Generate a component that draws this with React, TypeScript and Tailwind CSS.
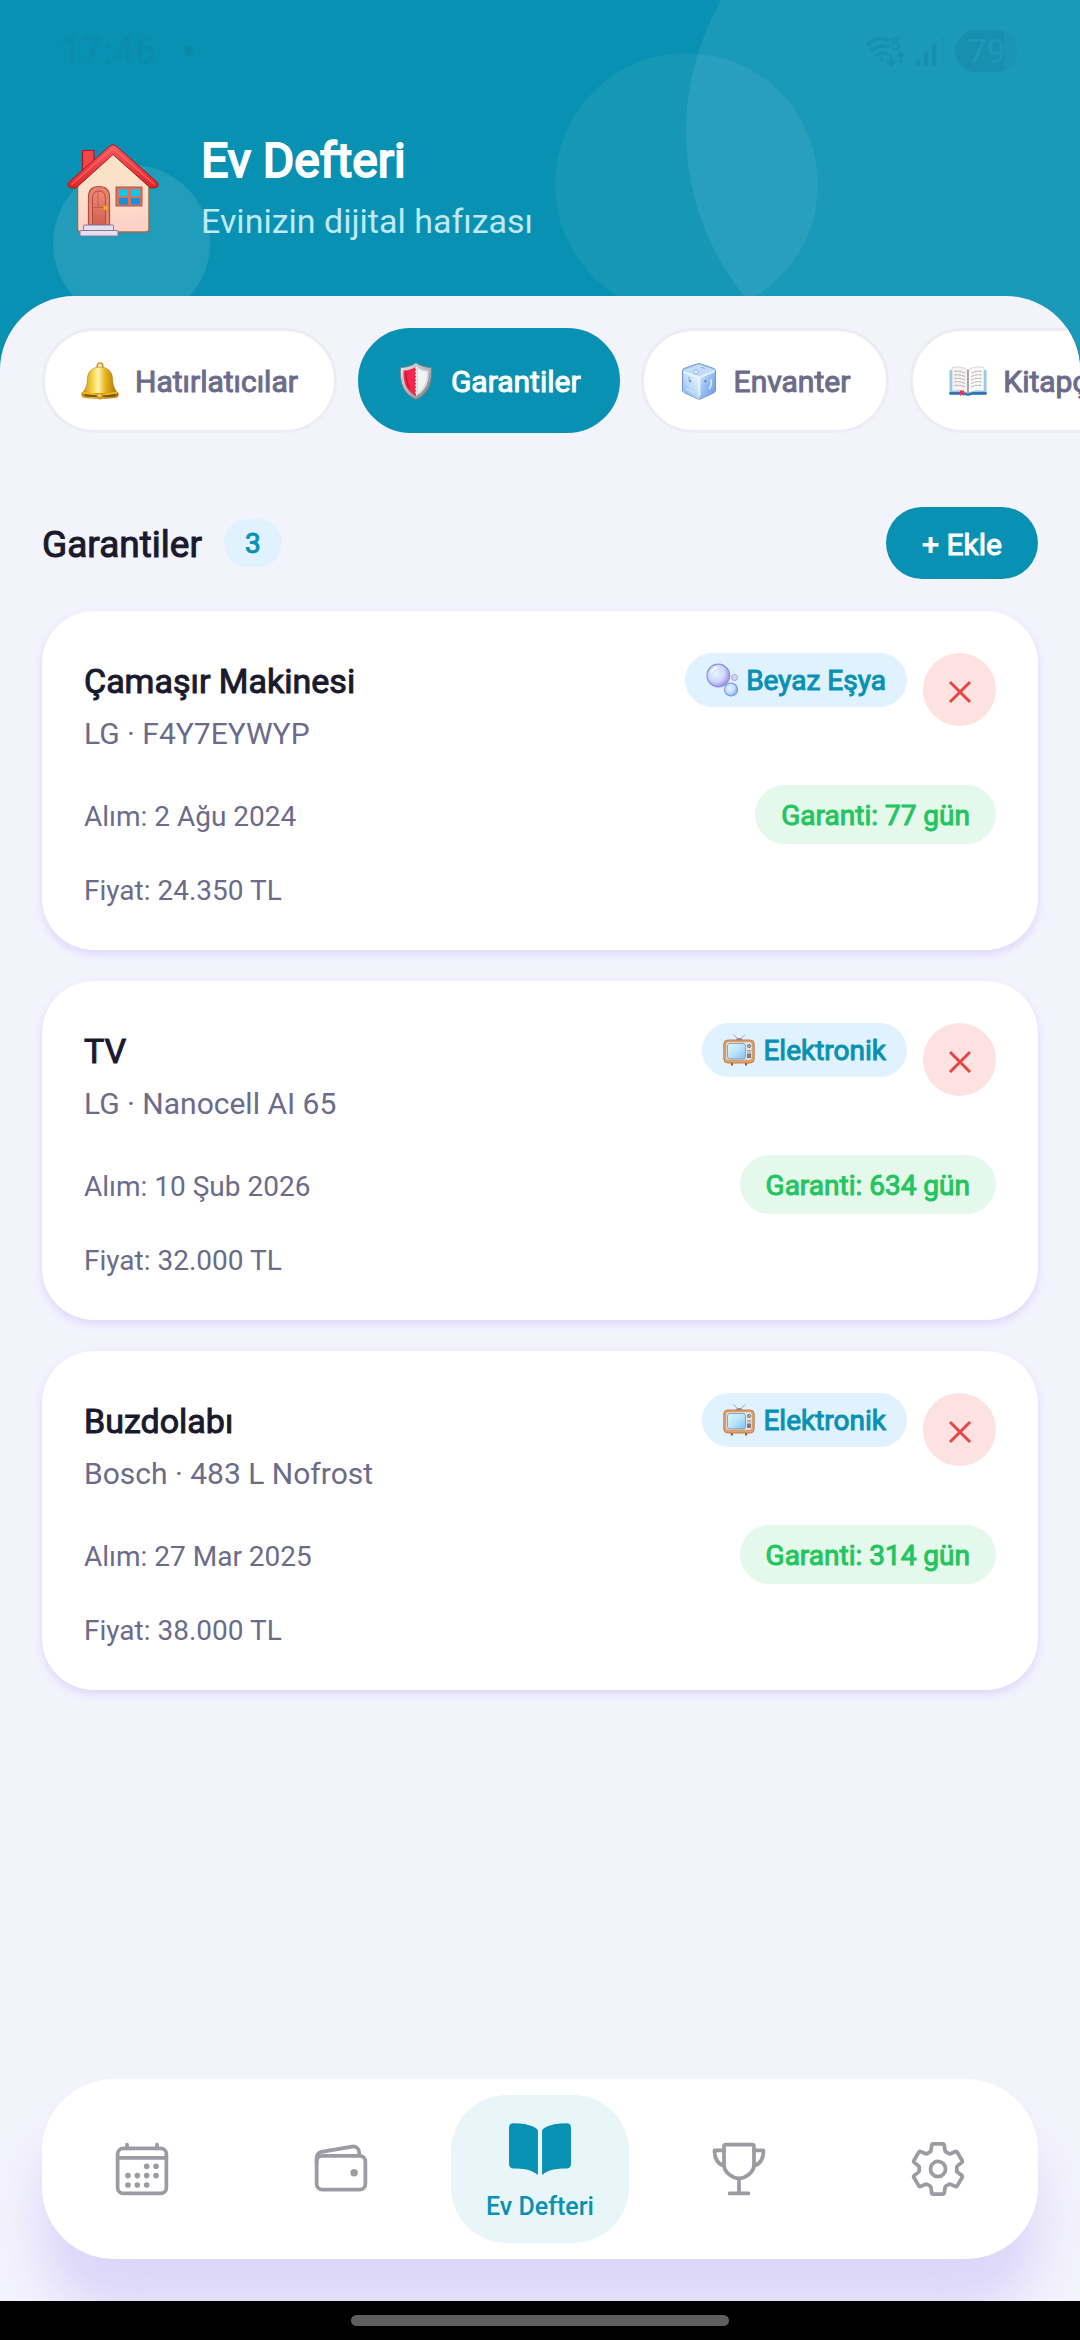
import { useState } from "react";
import { IoBook, IoCalendarOutline, IoSettingsOutline, IoTrophyOutline, IoWalletOutline } from "react-icons/io5";

function HouseIcon() {
	return (
		<svg viewBox="0 0 92 93" className="w-[92px] h-[93px]" aria-hidden="true">
			<defs>
				<linearGradient id="wall" x1="0" y1="0" x2="0" y2="1">
					<stop offset="0" stopColor="#f9e3c4" />
					<stop offset="0.5" stopColor="#fce0cb" />
					<stop offset="1" stopColor="#fdd0c6" />
				</linearGradient>
				<linearGradient id="roof" x1="0" y1="0" x2="0" y2="1">
					<stop offset="0" stopColor="#fb5a60" />
					<stop offset="1" stopColor="#dc2429" />
				</linearGradient>
				<linearGradient id="door" x1="0" y1="0" x2="0" y2="1">
					<stop offset="0" stopColor="#f08a72" />
					<stop offset="1" stopColor="#cf5f55" />
				</linearGradient>
			</defs>
			<path d="M15.500 6.500h11.500v20l-11.500 10z" fill="#f0474c" stroke="#a8181c" strokeWidth="1.200" />
			<path d="M10.500 38L46 7l36 31v47q0 3-3 3H13.500q-3 0-3-3z" fill="url(#wall)" stroke="#9a6b4c" strokeWidth="1.500" />
			<path d="M46 0.800q2 0 3.500 1.500L90.500 38.500q2 3-1 5l-6 0.500L46 10.500 9 44H3.500q-4-2-2-5.500L42.500 2.300Q44 0.800 46 0.800z" fill="url(#roof)" stroke="#a5161b" strokeWidth="1" />
			<path d="M46 4L5 40M46 4l41 36" stroke="#ff7a7a" strokeWidth="1.500" strokeLinecap="round" opacity="0.6" />
			<path d="M21.500 81V53q0-10.500 10.500-10.500T42.500 53v28z" fill="#e8836d" stroke="#b04b3f" strokeWidth="1.200" />
			<path d="M25.500 81V55q0-8 6.500-8t6.500 8v26z" fill="url(#door)" stroke="#b04b3f" strokeWidth="1" />
			<path d="M25.500 63.500h13M31 47v16" stroke="#b95549" strokeWidth="0.800" />
			<circle cx="38.300" cy="64" r="2" fill="#ffb300" />
			<rect x="49" y="43" width="26" height="19" fill="#d77160" stroke="#a9594a" strokeWidth="1" />
			<rect x="52" y="45.500" width="9" height="6.500" fill="#00cdf7" />
			<rect x="64" y="45.500" width="9" height="6.500" fill="#00cdf7" />
			<rect x="52" y="54" width="9" height="6.500" fill="#1192e0" />
			<rect x="64" y="54" width="9" height="6.500" fill="#1192e0" />
			<rect x="16.500" y="81" width="30" height="5.500" rx="1" fill="#e6e0ee" stroke="#85799a" strokeWidth="1" />
			<rect x="13" y="86.500" width="38" height="5.500" rx="1" fill="#e6e0ee" stroke="#85799a" strokeWidth="1" />
		</svg>
	);
}

function BellIcon() {
	return (
		<svg viewBox="0 0 38 38" className="w-[38px] h-[38px]" aria-hidden="true">
			<defs>
				<linearGradient id="bell" x1="0" y1="0" x2="1" y2="0">
					<stop offset="0" stopColor="#c98a08" />
					<stop offset="0.3" stopColor="#f8d545" />
					<stop offset="0.45" stopColor="#fff3ae" />
					<stop offset="0.65" stopColor="#e6b31c" />
					<stop offset="1" stopColor="#a86a0a" />
				</linearGradient>
			</defs>
			<circle cx="19" cy="4" r="2.800" fill="none" stroke="#d99d18" strokeWidth="1.800" />
			<path d="M19 5c-7 0-12 4-12.500 11C6 24 5 27 1 31c-1 2 0 4 2 4.500 10 1.500 22 1.500 32 0 2-.5 3-2.500 2-4.500-4-4-5-7-5.500-15C31 9 26 5 19 5z" fill="url(#bell)" stroke="#b67c10" strokeWidth="0.600" />
			<ellipse cx="19" cy="33.200" rx="16" ry="2.300" fill="#7e5310" />
			<path d="M2 30.500q17 4 34 0" stroke="#e9b62c" strokeWidth="1.800" fill="none" />
			<circle cx="19" cy="34.300" r="3.200" fill="#d99a1c" />
			<circle cx="18.500" cy="33.500" r="1.300" fill="#fbe07a" />
		</svg>
	);
}

function ShieldIcon() {
	return (
		<svg viewBox="0 0 38 38" className="w-[38px] h-[38px]" aria-hidden="true">
			<defs>
				<linearGradient id="rim" x1="0" y1="0" x2="1" y2="1">
					<stop offset="0" stopColor="#e6e9eb" />
					<stop offset="0.5" stopColor="#b5b9bd" />
					<stop offset="1" stopColor="#70767c" />
				</linearGradient>
			</defs>
			<path d="M19 0.800C15 4 9 5.500 3.500 5.500 2.500 20 6 32 19 37.500 32 32 35.500 20 34.500 5.500 29 5.500 23 4 19 0.800z" fill="url(#rim)" stroke="#757b80" strokeWidth="0.800" />
			<path d="M19 4.500C15.500 7 11 8.500 6.500 8.500 6 20 9 29 19 34z" fill="#f5284b" />
			<path d="M19 4.500C22.500 7 27 8.500 31.500 8.500 32 20 29 29 19 34z" fill="#dcdcdf" />
			<path d="M21 7c3 2 6 2.800 9 3-.2 9-2 15-9 21z" fill="#f3f3f5" />
			<path d="M19 5v28" stroke="#fff" strokeWidth="1.500" strokeDasharray="2 1.500" />
			<path d="M9 10c0 8 1 13 4 17" stroke="#c9122f" strokeWidth="1.500" fill="none" />
		</svg>
	);
}

function IceIcon() {
	return (
		<svg viewBox="0 0 38 38" className="w-[38px] h-[38px]" aria-hidden="true">
			<defs>
				<linearGradient id="iceLeft" x1="0" y1="1" x2="0.8" y2="0">
					<stop offset="0" stopColor="#7fa6e6" />
					<stop offset="0.5" stopColor="#bfdcf9" />
					<stop offset="1" stopColor="#eaf6ff" />
				</linearGradient>
				<linearGradient id="iceRight" x1="0" y1="0" x2="1" y2="1">
					<stop offset="0" stopColor="#cfe6fc" />
					<stop offset="0.5" stopColor="#94bdf2" />
					<stop offset="1" stopColor="#6d92dd" />
				</linearGradient>
			</defs>
			<path d="M4 6.500L17.500 1.800q1.500-.5 3 0L34 6.500q1.500.8 1.500 2.500v19q0 2-1.800 3L21 36.800q-2 .8-3.500 0L4 30.500q-1.500-1-1.500-2.500V9q0-1.700 1.500-2.500z" fill="#a9c9f3" stroke="#7497d2" strokeWidth="1" />
			<path d="M3.500 9.500L19.500 15.500v21q-1 .3-2 0L4.500 30q-1-.7-1-2z" fill="url(#iceLeft)" />
			<path d="M19.500 15.500L35 9v19q0 1.500-1.500 2.500L21 36.300l-1.500.2z" fill="url(#iceRight)" />
			<path d="M4 8L18 2.800q1-.4 2 0L34.500 8 19.500 14.500z" fill="#c3ddf6" />
			<path d="M3.500 9.500l16 6 15.500-6.500M19.500 15.500V34" stroke="#f4fbff" strokeWidth="2" fill="none" opacity="0.75" />
			<circle cx="16" cy="10" r="2.200" fill="#e9f5ff" stroke="#86a9dc" strokeWidth="0.900" />
			<path d="M21.500 5.500l3 1M9 15v2.500" stroke="#86a9dc" strokeWidth="1" strokeLinecap="round" />
			<circle cx="10" cy="19" r="1.300" fill="#6d97dd" />
			<path d="M24 18.500l2.500-.5-1 3z" fill="#4579cf" />
			<path d="M31 18q1 5-1.500 8.500" stroke="#dff0ff" strokeWidth="1.500" strokeLinecap="round" fill="none" />
			<path d="M6 27q4 1 8 4" stroke="#dcecff" fill="none" />
		</svg>
	);
}

function OpenBookIcon() {
	return (
		<svg viewBox="0 0 38 38" className="w-[38px] h-[38px]" aria-hidden="true">
			<path d="M0.500 8h3v20h31V8h3v24.500H22q-3 2-6 0H0.500z" fill="#8ccbea" />
			<path d="M0.500 30h14q4.500 0 4.500 2 0-2 4.500-2h14v2.800H23q-4 2-8 0H0.500z" fill="#2f74b8" />
			<path d="M19 8Q12 3.500 3 5.500V29q9-1.500 16 2z" fill="#f4f2f2" stroke="#c9c4c4" strokeWidth="0.700" />
			<path d="M19 8q7-4.500 16-2.500V29q-9-1.500-16 2z" fill="#fbfafa" stroke="#c9c4c4" strokeWidth="0.700" />
			<path d="M19 8v23" stroke="#9c9696" strokeWidth="1.600" />
			<path d="M5.500 9.500q6-1 11 2M5.500 13q6-1 11 2M5.500 16.500q6-1 11 2M5.500 20q6-1 11 2M5.500 23.500q6-1 11 2M32.500 9.500q-6-1-11 2M32.500 13q-6-1-11 2M32.500 16.500q-6-1-11 2M32.500 20q-6-1-11 2M32.500 23.500q-6-1-11 2" stroke="#aaa5a5" strokeWidth="1" fill="none" strokeDasharray="3 0.800" />
			<path d="M11 28.500h4V34l-2-1.500L11 34z" fill="#ee3158" />
		</svg>
	);
}

function BubblesIcon() {
	return (
		<svg viewBox="0 0 32 34" className="w-8 h-[34px]" aria-hidden="true">
			<defs>
				<radialGradient id="bubble" cx="0.4" cy="0.4" r="0.62">
					<stop offset="0" stopColor="#e3f4ff" />
					<stop offset="0.6" stopColor="#cfd8fb" />
					<stop offset="1" stopColor="#a48ce6" />
				</radialGradient>
				<radialGradient id="bubble2" cx="0.4" cy="0.4" r="0.62">
					<stop offset="0" stopColor="#e6f5ff" />
					<stop offset="0.6" stopColor="#c2dafb" />
					<stop offset="1" stopColor="#8fa8ea" />
				</radialGradient>
			</defs>
			<circle cx="12.300" cy="12.500" r="11.300" fill="url(#bubble)" stroke="#8492df" strokeWidth="1.200" />
			<circle cx="25" cy="26.500" r="6.500" fill="url(#bubble2)" stroke="#6f9be0" strokeWidth="1.100" />
			<circle cx="28.500" cy="14.500" r="3" fill="#d3d6f7" stroke="#a89de6" strokeWidth="1" />
			<path d="M5.500 9q2-4 5.500-4.500" stroke="#fff" strokeWidth="1.300" fill="none" strokeLinecap="round" />
		</svg>
	);
}

function TvIcon() {
	return (
		<svg viewBox="0 0 32 34" className="w-8 h-[34px]" aria-hidden="true">
			<defs>
				<linearGradient id="screen" x1="0" y1="0" x2="1" y2="1">
					<stop offset="0" stopColor="#dff6ff" />
					<stop offset="0.5" stopColor="#b9e4fd" />
					<stop offset="1" stopColor="#83bff5" />
				</linearGradient>
			</defs>
			<path d="M16 7L10.500 1.500M16.500 7L22 1.500" stroke="#9a9a9f" strokeWidth="0.900" />
			<path d="M13 7q0-2 3.200-2t3.200 2z" fill="#8b8b90" />
			<path d="M7.500 29h2.500v3.500H8zM22 29h2.500l-.5 3.500h-2z" fill="#a5562c" />
			<rect x="0.800" y="7" width="30.400" height="23" rx="4" fill="#e3a36b" stroke="#bd753f" strokeWidth="0.900" />
			<rect x="3" y="9" width="26" height="18" rx="2.500" fill="#ebe7e5" stroke="#b39a8c" strokeWidth="0.500" />
			<rect x="4.500" y="10.500" width="18" height="15.500" rx="2.500" fill="url(#screen)" stroke="#7d909c" strokeWidth="0.800" />
			<circle cx="26" cy="13" r="2" fill="#77777e" />
			<circle cx="26" cy="13" r="0.800" fill="#d8d8da" />
			<path d="M24 17.500h4M24 19h4" stroke="#8e8e96" strokeWidth="0.800" />
			<rect x="24" y="20.500" width="4" height="4.500" fill="#7d7a80" />
		</svg>
	);
}

function StatusBar() {
	return (
		<div className="flex h-[102px] items-center justify-between pl-[60px] pr-[62px]">
			<div className="flex items-center gap-7 text-[38px] font-medium leading-none text-[#0b8cac]">
				<span>17:46</span>
				<span className="h-[10px] w-[10px] rounded-full bg-[#0a88a6]" />
			</div>
			<div className="flex items-center gap-[10px]">
				<svg viewBox="0 0 40 31" className="h-[31px] w-10" fill="none" stroke="#198faf" strokeWidth="3.500" aria-hidden="true">
					<path d="M1 9Q13-2 24 5M5 15q9-8 18-4M10 20q6-5 12-1" />
					<circle cx="16" cy="24" r="2" fill="#198faf" stroke="none" />
					<path d="M33 2h-6v5q6-1 6 3t-7 3" strokeWidth="2.500" />
					<path d="M25 18v11M21 25l4 4 4-4M35 27V17M31 21l4-4 4 4" strokeWidth="3" />
				</svg>
				<svg viewBox="0 0 29 31" className="h-[31px] w-[29px]" fill="#198faf" aria-hidden="true">
					<rect x="0" y="24" width="4" height="6" rx="1" />
					<rect x="8" y="16" width="4" height="14" rx="1" />
					<rect x="16" y="8" width="4" height="22" rx="1" />
					<rect x="25" y="0" width="3" height="30" rx="1" opacity="0.4" />
				</svg>
				<div className="flex h-[42px] w-[63px] items-center justify-center rounded-full bg-linear-to-r from-[#198faf] from-78% to-[#1a95b5] to-78% text-[34px] leading-none text-[#1b99b9]">
					79
				</div>
			</div>
		</div>
	);
}

const tabs = [
	{ name: "Hatırlatıcılar", icon: BellIcon },
	{ name: "Garantiler", icon: ShieldIcon },
	{ name: "Envanter", icon: IceIcon },
	{ name: "Kitapçık", icon: OpenBookIcon },
];

const initialItems = [
	{ id: 1, title: "Çamaşır Makinesi", model: "LG · F4Y7EYWYP", category: "Beyaz Eşya", icon: BubblesIcon, date: "2 Ağu 2024", days: 77, price: "24.350" },
	{ id: 2, title: "TV", model: "LG · Nanocell AI 65", category: "Elektronik", icon: TvIcon, date: "10 Şub 2026", days: 634, price: "32.000" },
	{ id: 3, title: "Buzdolabı", model: "Bosch · 483 L Nofrost", category: "Elektronik", icon: TvIcon, date: "27 Mar 2025", days: 314, price: "38.000" },
];

const navLinks = [
	{ name: "Takvim", icon: IoCalendarOutline },
	{ name: "Cüzdan", icon: IoWalletOutline },
	{ name: "Ev Defteri", icon: IoBook, active: true },
	{ name: "Başarılar", icon: IoTrophyOutline },
	{ name: "Ayarlar", icon: IoSettingsOutline },
];

export default function App() {
	const [activeTab, setActiveTab] = useState("Garantiler");
	const [items, setItems] = useState(initialItems);

	return (
		<div className="relative flex min-h-screen flex-col overflow-hidden bg-[#0891b2] font-[Roboto,sans-serif]">
			{/* header bubbles */}
			<div className="absolute -right-[131px] -top-[131px] h-[525px] w-[525px] rounded-full bg-white/8" />
			<div className="absolute right-[262px] top-[53px] h-[263px] w-[263px] rounded-full bg-white/6" />
			<div className="absolute left-[53px] top-[165px] h-[157px] w-[157px] rounded-full bg-white/10" />

			<header className="relative">
				<StatusBar />
				<div className="flex items-center gap-[42px] px-[67px] pb-[55px] pt-[29px]">
					<div className="mt-2">
						<HouseIcon />
					</div>
					<div className="flex flex-col gap-[10px]">
						<h1 className="text-[48px] leading-[60px] text-white [-webkit-text-stroke:2px]">Ev Defteri</h1>
						<p className="text-[34px] leading-10 text-[#bfe9f5]">Evinizin dijital hafızası</p>
					</div>
				</div>
			</header>

			<div className="relative flex flex-1 flex-col overflow-hidden rounded-t-[74px] bg-[#f3f3fc] pt-8">
				<div className="flex gap-[21px] overflow-x-auto px-[42px] [scrollbar-width:none]">
					{tabs.map((tab) => (
						<button
							key={tab.name}
							onClick={() => setActiveTab(tab.name)}
							className={`flex h-[105px] shrink-0 items-center gap-4 rounded-full border-3 px-9 text-[30px] [-webkit-text-stroke:1px] ${
								activeTab === tab.name
									? "border-[#0891b2] bg-[#0891b2] text-white"
									: "border-[#ececf5] bg-white text-[#6b6b8a]"
							}`}
						>
							<tab.icon />
							<span className="pt-0.5">{tab.name}</span>
						</button>
					))}
				</div>

				<main className="flex-1 px-[42px] pt-[74px]">
					<div className="flex items-center justify-between">
						<div className="flex items-center gap-[22px]">
							<h2 className="pt-1 text-[37px] leading-[46px] text-[#1a1a2e] [-webkit-text-stroke:1px]">Garantiler</h2>
							<span className="rounded-full bg-[#e0f2fe] px-[21px] pt-0.5 text-[28px] leading-[46px] text-[#0891b2] [-webkit-text-stroke:1px]">
								{items.length}
							</span>
						</div>
						<button className="h-[72px] rounded-full bg-[#0891b2] px-9 pt-0.5 text-[30px] text-white [-webkit-text-stroke:1px]">
							+ Ekle
						</button>
					</div>

					<ul className="mt-8 flex flex-col gap-[31px]">
						{items.map((item) => (
							<li
								key={item.id}
								className="rounded-[52px] bg-white p-[42px] shadow-[0_4px_8px_rgba(108,71,255,0.16)]"
							>
								<div className="flex items-start gap-4">
									<div className="flex flex-1 flex-col gap-[15px] pt-2">
										<h3 className="text-[34px] leading-10 text-[#1a1a2e] [-webkit-text-stroke:1px]">{item.title}</h3>
										<p className="text-[30px] leading-9 text-[#6b6b8a]">{item.model}</p>
									</div>
									<div className="flex h-[54px] items-center gap-2 rounded-full bg-[#e0f2fe] px-[21px] text-[28px] text-[#0891b2] [-webkit-text-stroke:1px]">
										<item.icon />
										<span className="pt-0.5">{item.category}</span>
									</div>
									<button
										aria-label="Sil"
										onClick={() => setItems(items.filter((i) => i.id !== item.id))}
										className="flex h-[73px] w-[73px] items-center justify-center rounded-full bg-[#fee2e2]"
									>
										<svg viewBox="0 0 24 24" className="mt-1 h-6 w-6" stroke="#e64545" strokeWidth="3" aria-hidden="true">
											<path d="M2 2l20 20M22 2L2 22" />
										</svg>
									</button>
								</div>
								<div className="mt-[33px] flex items-center justify-between text-[28px]">
									<p className="pt-1 text-[#6b6b8a]">Alım: {item.date}</p>
									<span className="rounded-full bg-[#e4f8eb] px-[26px] pt-0.5 leading-[57px] text-[#22c55e] [-webkit-text-stroke:1px]">
										Garanti: {item.days} gün
									</span>
								</div>
								<p className="mt-[30px] text-[28px] leading-[34px] text-[#6b6b8a]">Fiyat: {item.price} TL</p>
							</li>
						))}
					</ul>
				</main>

				<nav className="mx-[42px] mb-[42px] mt-10 flex h-[180px] items-center rounded-[72px] bg-white shadow-[0_52px_50px_rgba(116,84,240,0.18)]">
					{navLinks.map((link) => (
						<a key={link.name} href="#" aria-label={link.name} className="flex flex-1 justify-center">
							{link.active ? (
								<span className="flex h-[148px] w-[178px] flex-col items-center justify-center gap-[10px] rounded-[56px] bg-[#e8f5f9] text-[#0891b2]">
									<link.icon size={66} />
									<span className="text-[25px] font-medium leading-7">{link.name}</span>
								</span>
							) : (
								<link.icon size={60} className="text-[#9b9ba3]" />
							)}
						</a>
					))}
				</nav>
			</div>

			<footer className="relative flex h-[39px] items-center justify-center bg-black">
				<div className="h-[11px] w-[35%] rounded-full bg-[#5f5f5f]" />
			</footer>
		</div>
	);
}
